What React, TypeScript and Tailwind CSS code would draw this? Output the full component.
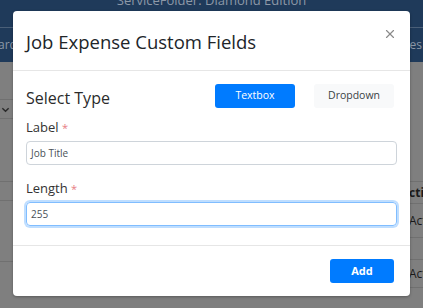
import { X } from "lucide-react";

function Background() {
  return (
    <div className="flex h-[308px] w-[423px] flex-col bg-[#7f7f7f] font-['Open_Sans',sans-serif]">
      <div className="flex h-[62px] flex-col bg-[#1f3a5a]">
        <div className="flex h-[28px] flex-col items-center border-b border-[#4a5f78]">
          <span className="-mt-[9px] text-[13px] leading-[18px] text-[#8d98a7]">ServiceFolder: Diamond Edition</span>
        </div>
        <div className="flex flex-1 items-center justify-between">
          <span className="-ml-[2px] text-[12px] text-[#8d98a7]">ard</span>
          <span className="mr-[1px] text-[12px] text-[#8d98a7]">es</span>
        </div>
      </div>
      <div className="flex flex-1 justify-between">
        <div className="flex w-[14px] flex-col">
          <div className="mt-[37px] flex h-[20px] items-center border-y border-[#707070] pl-[1px] text-[#2a2a2a]">
            <svg width="9" height="9" viewBox="0 0 10 10"><path d="M1.5 3.5 5 7l3.5-3.5" stroke="currentColor" strokeWidth="1.6" fill="none" /></svg>
          </div>
          <div className="mt-[62px] h-[20px] border-y border-[#707070]" />
          <div className="mt-[60px] h-px bg-[#707070]" />
        </div>
        <div className="flex w-[14px] flex-col text-[12px] text-[#1a1a1a]">
          <div className="mt-[119px] h-px bg-[#707070]" />
          <div className="flex h-[21px] items-center font-bold">ctiv</div>
          <div className="h-px bg-[#707070]" />
          <div className="flex h-[33px] items-center">Act</div>
          <div className="h-px bg-[#707070]" />
          <div className="h-[21px]" />
          <div className="h-px bg-[#707070]" />
          <div className="flex h-[27px] items-center">Act</div>
          <div className="h-px bg-[#707070]" />
        </div>
      </div>
    </div>
  );
}

export default function App() {
  return (
    <div className="relative h-[308px] w-[423px] overflow-hidden">
      <Background />
      <div className="absolute left-[13px] top-[11px] flex h-[285px] w-[397px] flex-col rounded-[4px] bg-white font-['Open_Sans',sans-serif] text-[#212529] shadow-[0_1px_3px_rgba(0,0,0,0.3)]">
        <div className="flex h-[60px] items-center justify-between border-b border-[#e6e6e6] pl-[13px] pr-[13px]">
          <h1 className="pt-[3px] text-[18.5px] leading-none">Job Expense Custom Fields</h1>
          <X className="-mt-[14px] h-[14px] w-[14px] text-[#8a8a8a]" strokeWidth={2} />
        </div>
        <div className="flex flex-1 flex-col px-[13px] pt-[13px]">
          <div className="flex items-center justify-between pr-[3px]">
            <h2 className="pt-[4px] text-[16px] font-medium leading-none text-[#2b2b2b]">Select Type</h2>
            <div className="flex gap-[19px]">
              <button className="h-[24px] w-[80px] rounded-[3px] bg-[#007bff] text-[10.5px] text-white">Textbox</button>
              <button className="h-[24px] w-[80px] rounded-[3px] bg-[#f8f9fa] text-[10.5px] text-[#3a3f45]">Dropdown</button>
            </div>
          </div>
          <label className="mt-[10px] text-[13px] leading-[18px] text-[#333]">
            Label <span className="text-[11px] text-[#e77b84]">*</span>
          </label>
          <div className="mt-[4px] flex h-[24px] items-center rounded-[4px] border border-[#ced4da] px-[4px] text-[10px] text-[#495057]">Job Title</div>
          <label className="mt-[14px] text-[13px] leading-[18px] text-[#333]">
            Length <span className="text-[11px] text-[#e77b84]">*</span>
          </label>
          <div className="mt-[4px] flex h-[24px] items-center rounded-[4px] border border-[#80bdff] px-[4px] text-[10px] text-[#495057] shadow-[0_0_0_2px_rgba(0,123,255,0.25)]">255</div>
        </div>
        <div className="flex h-[51px] items-center justify-end border-t border-[#e6e6e6] pr-[16px]">
          <button className="h-[24px] w-[64px] rounded-[3px] bg-[#007bff] text-[11px] font-bold text-white">Add</button>
        </div>
      </div>
    </div>
  );
}
